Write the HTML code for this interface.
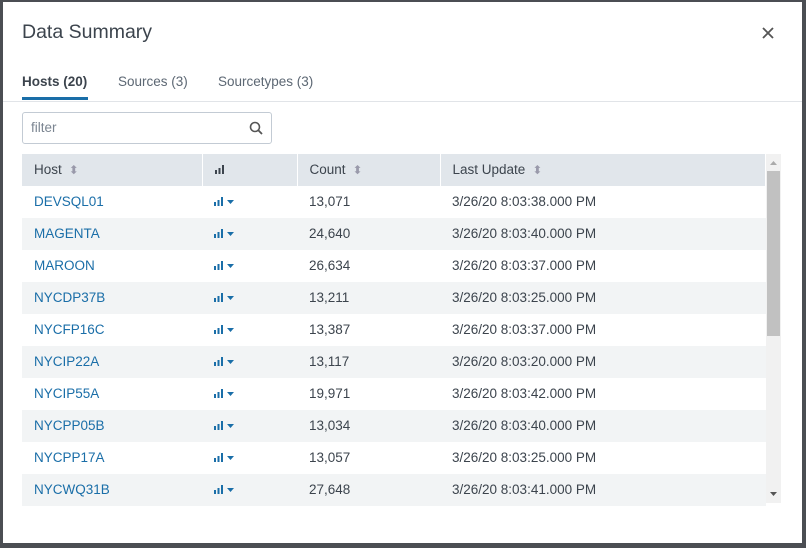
<!DOCTYPE html>
<html><head><style>
*{margin:0;padding:0;box-sizing:border-box}
body{width:806px;height:548px;background:#4b4e53;font-family:"Liberation Sans",sans-serif;position:relative;overflow:hidden}
.m{position:absolute;left:3px;top:2px;width:799px;height:541px;background:#fff}
.t{position:absolute;left:22px;top:21px;font-size:19.5px;color:#3c444d}
.x{position:absolute;left:760px;top:25px;width:16px;height:16px}
.tab{position:absolute;top:74px;font-size:13.5px;color:#5c6773}
.ul{position:absolute;left:22px;top:97px;width:66px;height:3px;background:#1a6ea8}
.hr{position:absolute;left:3px;top:101px;width:799px;height:1px;background:#e1e4e8}
.f{position:absolute;left:22px;top:112px;width:250px;height:32px;border:1px solid #c3cbd4;border-radius:3px;font-size:13.5px;color:#7b8591;padding:7px 8px}
table{position:absolute;left:22px;top:154px;width:744px;border-collapse:collapse;font-size:13.5px}
th{height:32px;background:#e1e6eb;color:#3c444d;font-weight:normal;text-align:left;padding-left:12px;padding-bottom:2px;border-right:1px solid #fff}
td{height:32px;padding-left:12px;padding-bottom:2px;color:#3c444d}
tr:nth-child(odd) td{background:#f2f4f5}
td.h{color:#1a6ea8}
.s{color:#99a;font-size:12px;margin-left:7px}
.sb{position:absolute;left:766px;top:154px;width:15px;height:349px;background:#f1f1f1}
.th{position:absolute;left:767px;top:171px;width:13px;height:165px;background:#c1c1c1}
</style></head><body>
<div class="m"></div>
<div class="t">Data Summary</div>
<svg class="x" viewBox="0 0 16 16"><path d="M3 3L13 13M13 3L3 13" stroke="#555" stroke-width="1.8"/></svg>
<div class="tab" style="left:22px;color:#3c444d;font-weight:bold">Hosts (20)</div>
<div class="tab" style="left:118px">Sources (3)</div>
<div class="tab" style="left:218px">Sourcetypes (3)</div>
<div class="ul"></div><div class="hr"></div>
<div class="f">filter<svg style="position:absolute;right:8px;top:8px" width="14" height="14" viewBox="0 0 14 14"><circle cx="6" cy="6" r="4.5" stroke="#555" stroke-width="1.6" fill="none"/><path d="M9.3 9.3L13 13" stroke="#555" stroke-width="1.8"/></svg></div>
<table>
<tr><th style="width:180px">Host<span class="s">⬍</span></th><th style="width:95px"><svg width="10" height="9"><rect x="0" y="5" width="2" height="4" fill="#3c444d"/><rect x="3.5" y="3" width="2" height="6" fill="#3c444d"/><rect x="7" y="0" width="2" height="9" fill="#3c444d"/></svg></th><th style="width:143px">Count<span class="s">⬍</span></th><th>Last Update<span class="s">⬍</span></th></tr>
<tr><td class="h">DEVSQL01</td><td><svg width="22" height="9"><rect x="0" y="5" width="2" height="4" fill="#1a6ea8"/><rect x="3.5" y="3" width="2" height="6" fill="#1a6ea8"/><rect x="7" y="0" width="2" height="9" fill="#1a6ea8"/><path d="M13 3h7l-3.5 4z" fill="#1a6ea8"/></svg></td><td>13,071</td><td>3/26/20 8:03:38.000 PM</td></tr>
<tr><td class="h">MAGENTA</td><td><svg width="22" height="9"><rect x="0" y="5" width="2" height="4" fill="#1a6ea8"/><rect x="3.5" y="3" width="2" height="6" fill="#1a6ea8"/><rect x="7" y="0" width="2" height="9" fill="#1a6ea8"/><path d="M13 3h7l-3.5 4z" fill="#1a6ea8"/></svg></td><td>24,640</td><td>3/26/20 8:03:40.000 PM</td></tr>
<tr><td class="h">MAROON</td><td><svg width="22" height="9"><rect x="0" y="5" width="2" height="4" fill="#1a6ea8"/><rect x="3.5" y="3" width="2" height="6" fill="#1a6ea8"/><rect x="7" y="0" width="2" height="9" fill="#1a6ea8"/><path d="M13 3h7l-3.5 4z" fill="#1a6ea8"/></svg></td><td>26,634</td><td>3/26/20 8:03:37.000 PM</td></tr>
<tr><td class="h">NYCDP37B</td><td><svg width="22" height="9"><rect x="0" y="5" width="2" height="4" fill="#1a6ea8"/><rect x="3.5" y="3" width="2" height="6" fill="#1a6ea8"/><rect x="7" y="0" width="2" height="9" fill="#1a6ea8"/><path d="M13 3h7l-3.5 4z" fill="#1a6ea8"/></svg></td><td>13,211</td><td>3/26/20 8:03:25.000 PM</td></tr>
<tr><td class="h">NYCFP16C</td><td><svg width="22" height="9"><rect x="0" y="5" width="2" height="4" fill="#1a6ea8"/><rect x="3.5" y="3" width="2" height="6" fill="#1a6ea8"/><rect x="7" y="0" width="2" height="9" fill="#1a6ea8"/><path d="M13 3h7l-3.5 4z" fill="#1a6ea8"/></svg></td><td>13,387</td><td>3/26/20 8:03:37.000 PM</td></tr>
<tr><td class="h">NYCIP22A</td><td><svg width="22" height="9"><rect x="0" y="5" width="2" height="4" fill="#1a6ea8"/><rect x="3.5" y="3" width="2" height="6" fill="#1a6ea8"/><rect x="7" y="0" width="2" height="9" fill="#1a6ea8"/><path d="M13 3h7l-3.5 4z" fill="#1a6ea8"/></svg></td><td>13,117</td><td>3/26/20 8:03:20.000 PM</td></tr>
<tr><td class="h">NYCIP55A</td><td><svg width="22" height="9"><rect x="0" y="5" width="2" height="4" fill="#1a6ea8"/><rect x="3.5" y="3" width="2" height="6" fill="#1a6ea8"/><rect x="7" y="0" width="2" height="9" fill="#1a6ea8"/><path d="M13 3h7l-3.5 4z" fill="#1a6ea8"/></svg></td><td>19,971</td><td>3/26/20 8:03:42.000 PM</td></tr>
<tr><td class="h">NYCPP05B</td><td><svg width="22" height="9"><rect x="0" y="5" width="2" height="4" fill="#1a6ea8"/><rect x="3.5" y="3" width="2" height="6" fill="#1a6ea8"/><rect x="7" y="0" width="2" height="9" fill="#1a6ea8"/><path d="M13 3h7l-3.5 4z" fill="#1a6ea8"/></svg></td><td>13,034</td><td>3/26/20 8:03:40.000 PM</td></tr>
<tr><td class="h">NYCPP17A</td><td><svg width="22" height="9"><rect x="0" y="5" width="2" height="4" fill="#1a6ea8"/><rect x="3.5" y="3" width="2" height="6" fill="#1a6ea8"/><rect x="7" y="0" width="2" height="9" fill="#1a6ea8"/><path d="M13 3h7l-3.5 4z" fill="#1a6ea8"/></svg></td><td>13,057</td><td>3/26/20 8:03:25.000 PM</td></tr>
<tr><td class="h" style="height:29px">NYCWQ31B</td><td><svg width="22" height="9"><rect x="0" y="5" width="2" height="4" fill="#1a6ea8"/><rect x="3.5" y="3" width="2" height="6" fill="#1a6ea8"/><rect x="7" y="0" width="2" height="9" fill="#1a6ea8"/><path d="M13 3h7l-3.5 4z" fill="#1a6ea8"/></svg></td><td>27,648</td><td>3/26/20 8:03:41.000 PM</td></tr>
</table>
<div class="sb"></div><div class="th"></div>
<svg style="position:absolute;left:769px;top:160px" width="9" height="5"><path d="M1 5h7L4.5 1z" fill="#aaa"/></svg>
<svg style="position:absolute;left:769px;top:492px" width="9" height="5"><path d="M1 0h7L4.5 4z" fill="#555"/></svg>
</body></html>
